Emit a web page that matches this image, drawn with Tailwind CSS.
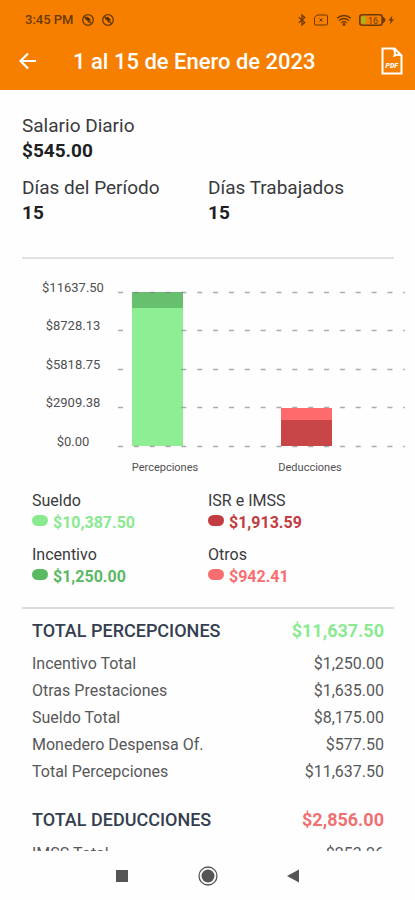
<!DOCTYPE html>
<html lang="es">
<head>
<meta charset="utf-8">
<meta name="viewport" content="width=device-width, initial-scale=1">
<title>1 al 15 de Enero de 2023</title>
<script src="https://cdn.jsdelivr.net/npm/@tailwindcss/browser@4"></script>
</head>
<body class="flex h-screen flex-col overflow-hidden bg-[#fefefe] font-[Roboto,sans-serif] text-[#3a3a3c]">
<header class="shrink-0 bg-[#f77f00] pb-2">
  <div class="flex h-10 items-center justify-between pr-5 pl-[25px] text-[#6b3a08]">
    <div class="flex items-center gap-2 text-[13px] font-medium">
      <span>3:45 PM</span>
      <svg class="size-3" viewBox="0 0 12 12" fill="none" stroke="currentColor" aria-hidden="true"><circle cx="6" cy="6" r="5.3" stroke-width="1.3"/><path d="M2.600 4.800l3-2 3.800 3.700-2-.5-1 3-1-2.500z" fill="#33200a" stroke="none"/><path d="M2.300 2.300l7.400 7.400" stroke-width="1.300"/></svg>
      <svg class="size-3" viewBox="0 0 12 12" fill="none" stroke="currentColor" aria-hidden="true"><circle cx="6" cy="6" r="5.3" stroke-width="1.3"/><path d="M2.600 4.800l3-2 3.800 3.700-2-.5-1 3-1-2.500z" fill="#33200a" stroke="none"/><path d="M2.300 2.300l7.400 7.400" stroke-width="1.300"/></svg>
    </div>
    <div class="flex items-center gap-[7px]">
      <svg class="h-3 w-2" viewBox="0 0 8 12" fill="none" stroke="currentColor" stroke-width="1.200" aria-hidden="true"><path d="M.8 3.300l6 5.200L4 11V1l2.800 2.500-6 5.200"/></svg>
      <svg class="h-3 w-4" viewBox="0 0 16 12" fill="none" stroke="currentColor" aria-hidden="true"><path d="M4 1h9.500q1 0 1 1v8q0 1-1 1h-11q-1 0-1-1V3.500z"/><path d="M6.500 4.500l3 3m0-3l-3 3"/></svg>
      <svg class="h-3 w-4" viewBox="0 0 16 12" fill="none" stroke="currentColor" stroke-width="1.300" aria-hidden="true"><path d="M1 4.200q7-5.400 14 0M3 6.500q5-4 10 0M5.200 8.700q2.800-2.200 5.600 0"/><circle cx="8" cy="10.500" r=".8" fill="currentColor"/></svg>
      <svg class="h-3 w-9" viewBox="0 0 36 12" fill="none" stroke="currentColor" aria-hidden="true"><rect x=".8" y=".8" width="22.400" height="10.400" rx="2.500" stroke-width="1.600"/><path d="M24 3.500q2 .5 2 2.500t-2 2.500z" fill="currentColor"/><rect x="2.500" y="2.500" width="4" height="7" fill="#9dbb20" stroke="none"/><text x="9" y="9.500" font-size="9" fill="currentColor" stroke="none">16</text><path d="M33.500 1.500l-4 5h2.200l-1 4 4.300-5.300h-2.400z" fill="currentColor" stroke="none"/></svg>
    </div>
  </div>
  <div class="flex h-[42px] items-center pr-3 pl-[18px] text-white">
    <button type="button" aria-label="Regresar" class="shrink-0"><svg class="size-5" viewBox="0 0 20 20" fill="none" stroke="currentColor" stroke-width="2.200"><path d="M18 10H3M10 2.500L2.500 10l7.500 7.500"/></svg></button>
    <h1 class="ml-[35px] flex-1 text-[22px] font-medium whitespace-nowrap">1 al 15 de Enero de 2023</h1>
    <button type="button" aria-label="Descargar PDF" class="shrink-0"><svg class="h-7 w-[22px]" viewBox="0 0 22 28" fill="none" stroke="currentColor" stroke-width="2"><path d="M1.500 1.500h12L20.500 8.500v18h-19zM12 1.500q3 3 1.500 7 3.500-1.500 7 0"/><text x="4.500" y="21" font-size="7" font-weight="900" font-style="italic" fill="currentColor" stroke="none">PDF</text></svg></button>
  </div>
</header>
<main class="min-h-0 flex-1 overflow-hidden pt-[23px] pr-[21px] pl-[22px]">
  <dl class="grid grid-cols-2 gap-y-3 border-b-2 border-[#e2e2e2] pb-8 text-[19px] leading-[25px]">
    <div class="col-span-2"><dt>Salario Diario</dt><dd class="font-bold text-[#202022]">$545.00</dd></div>
    <div><dt>Días del Período</dt><dd class="font-bold text-[#202022]">15</dd></div>
    <div><dt>Días Trabajados</dt><dd class="font-bold text-[#202022]">15</dd></div>
  </dl>
  <svg class="-ml-[22px] block w-[calc(100%+43px)]" viewBox="0 0 415 231" role="img" aria-label="Percepciones y deducciones">
    <path fill="#8eee94" d="M132 49h51v138h-51z"/><path fill="#66c06e" d="M132 33h51v16h-51z"/>
    <path fill="#ff6a6d" d="M281 149h51v12h-51z"/><path fill="#c84548" d="M281 161h51v26h-51z"/>
    <path d="M118 33.500H405M118 71.500H132M181.400 71.500H405M118 110.500H132M181.400 110.500H405M118 148.500H132M181.400 148.500H405M118 187.500H405" stroke="#808080" stroke-opacity=".65" stroke-width="1.300" stroke-dasharray="5 10.850"/>
    <g font-size="13" fill="#505052" text-anchor="middle">
      <text x="73" y="33">$11637.50</text><text x="73" y="71">$8728.13</text><text x="73" y="110">$5818.75</text><text x="73" y="148">$2909.38</text><text x="73" y="187">$0.00</text>
      <g font-size="11"><text x="165" y="212">Percepciones</text><text x="310" y="212">Deducciones</text></g>
    </g>
  </svg>
  <dl class="grid grid-cols-2 gap-y-2.5 border-b-2 border-[#dcdcdc] pb-[19px] text-base leading-[22px]">
    <div class="pl-2.5"><dt>Sueldo</dt><dd class="flex gap-[5px] font-bold text-[#8aea90]"><span class="mt-[3px] h-[11px] w-4 rounded-full bg-current"></span>$10,387.50</dd></div>
    <div><dt>ISR e IMSS</dt><dd class="flex gap-[5px] font-bold text-[#c23c40]"><span class="mt-[3px] h-[11px] w-4 rounded-full bg-current"></span>$1,913.59</dd></div>
    <div class="pl-2.5"><dt>Incentivo</dt><dd class="flex gap-[5px] font-bold text-[#5aba64]"><span class="mt-[3px] h-[11px] w-4 rounded-full bg-current"></span>$1,250.00</dd></div>
    <div><dt>Otros</dt><dd class="flex gap-[5px] font-bold text-[#f86e70]"><span class="mt-[3px] h-[11px] w-4 rounded-full bg-current"></span>$942.41</dd></div>
  </dl>
  <table class="mt-[7px] w-full text-base leading-[27px] text-[#585859]">
    <thead><tr class="text-lg leading-[30px]"><th scope="col" class="p-0 pb-1 pl-2.5 text-left font-medium text-[#343e50]">TOTAL PERCEPCIONES</th><td class="p-0 pr-2.5 pb-1 text-right font-bold text-[#8aea90]">$11,637.50</td></tr></thead>
    <tbody>
      <tr><td class="p-0 pl-2.5">Incentivo Total</td><td class="p-0 pr-2.5 text-right">$1,250.00</td></tr>
      <tr><td class="p-0 pl-2.5">Otras Prestaciones</td><td class="p-0 pr-2.5 text-right">$1,635.00</td></tr>
      <tr><td class="p-0 pl-2.5">Sueldo Total</td><td class="p-0 pr-2.5 text-right">$8,175.00</td></tr>
      <tr><td class="p-0 pl-2.5">Monedero Despensa Of.</td><td class="p-0 pr-2.5 text-right">$577.50</td></tr>
      <tr><td class="p-0 pl-2.5">Total Percepciones</td><td class="p-0 pr-2.5 text-right">$11,637.50</td></tr>
    </tbody>
  </table>
  <table class="mt-5 w-full text-base leading-[27px] text-[#585859]">
    <thead><tr class="text-lg leading-[30px]"><th scope="col" class="p-0 pb-[5px] pl-2.5 text-left font-medium text-[#343e50]">TOTAL DEDUCCIONES</th><td class="p-0 pr-2.5 pb-[5px] text-right font-bold text-[#f07072]">$2,856.00</td></tr></thead>
    <tbody><tr><td class="p-0 pl-2.5">IMSS Total</td><td class="p-0 pr-2.5 text-right">$253.26</td></tr></tbody>
  </table>
</main>
<nav class="flex h-[49px] shrink-0 items-center justify-center gap-[65px] bg-[#fefefe] text-[#555]" aria-label="Sistema">
  <button type="button" aria-label="Recientes"><svg class="size-5" viewBox="0 0 20 20"><path d="M3 4h12v12H3z" fill="currentColor"/></svg></button>
  <button type="button" aria-label="Inicio"><svg class="size-5" viewBox="0 0 20 20"><circle cx="10" cy="10" r="9" fill="none" stroke="currentColor" stroke-width="1.300"/><circle cx="10" cy="10" r="6.500" fill="currentColor"/></svg></button>
  <button type="button" aria-label="Atrás"><svg class="size-5" viewBox="0 0 20 20"><path d="M16 3.500v13L4 10z" fill="currentColor"/></svg></button>
</nav>
</body>
</html>
